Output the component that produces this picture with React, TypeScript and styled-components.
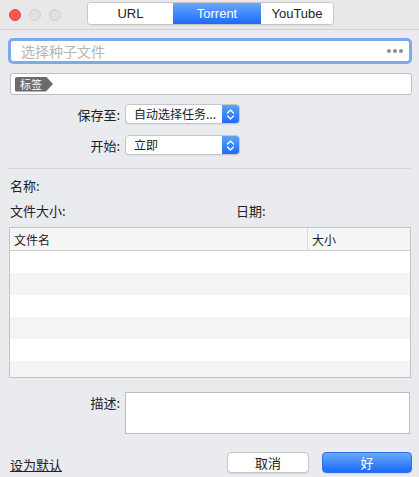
import React from 'react';
import styled, {createGlobalStyle} from 'styled-components';

const GlobalStyle = createGlobalStyle`
  html, body {
    margin: 0;
    padding: 0;
    background: #e9ebef;
  }
  body {
    font-family: "Noto Sans CJK SC", "Liberation Sans", sans-serif;
    font-size: 13px;
    color: #222;
  }
`;

const Window = styled.div`
  width: 419px;
  height: 477px;
  display: flex;
  flex-direction: column;
  background: #e9ebef;
  overflow: hidden;
`;

const TitleBar = styled.div`
  height: 30px;
  flex-shrink: 0;
  display: flex;
  align-items: center;
  padding-left: 9px;
  background: #e8e8e8;
  border-bottom: 1px solid #d2d2d2;
  box-sizing: border-box;
`;

const Lights = styled.div`
  display: flex;
  gap: 8px;
  width: 78px;
`;

const Light = styled.span<{$red?: boolean}>`
  width: 12px;
  height: 12px;
  border-radius: 50%;
  box-sizing: border-box;
  background: ${(p) => (p.$red ? '#fc5753' : '#e0e0e0')};
  border: 1px solid ${(p) => (p.$red ? '#de4a45' : '#d0d0d0')};
`;

const Segmented = styled.div`
  display: flex;
  height: 21px;
  margin-top: -2px;
  border: 1px solid #c8c8c8;
  border-radius: 4px;
  overflow: hidden;
  background: #fff;
  box-shadow: 0 1px 0 rgba(0, 0, 0, 0.05);
`;

const Segment = styled.div<{$active?: boolean; $w: number}>`
  width: ${(p) => p.$w}px;
  display: flex;
  align-items: center;
  justify-content: center;
  font-family: "Liberation Sans", "Noto Sans", sans-serif;
  font-size: 13px;
  color: ${(p) => (p.$active ? '#fff' : '#222')};
  background: ${(p) => (p.$active ? 'linear-gradient(#6aa6fb, #1a6cf8)' : '#fff')};
`;

const Content = styled.div`
  flex: 1;
  display: flex;
  flex-direction: column;
  padding: 8px 7px 0 8px;
`;

const FileInput = styled.div`
  height: 26px;
  box-sizing: border-box;
  border: 3px solid #7ea9ee;
  border-radius: 5px;
  background: #fff;
  display: flex;
  align-items: center;
  justify-content: space-between;
  padding: 0 6px 0 10px;
`;

const Placeholder = styled.span`
  font-size: 14px;
  color: #b5b5b5;
`;

const Dots = styled.span`
  display: flex;
  gap: 2px;
  span {
    width: 4px;
    height: 4px;
    border-radius: 50%;
    background: #8e8e8e;
  }
`;

const TagField = styled.div`
  margin: 9px 0 0 2px;
  height: 22px;
  box-sizing: border-box;
  border: 1px solid #bdbdbd;
  border-radius: 3px;
  background: #fff;
  display: flex;
  align-items: center;
  padding-left: 4px;
`;

const Tag = styled.span`
  height: 15px;
  padding: 0 11px 0 5px;
  display: flex;
  align-items: center;
  font-size: 11px;
  color: #fff;
  background: #6b6b6b;
  border-radius: 2px 0 0 2px;
  clip-path: polygon(0 0, calc(100% - 7px) 0, 100% 50%, calc(100% - 7px) 100%, 0 100%);
`;

const Form = styled.div`
  display: grid;
  grid-template-columns: 112px 115px;
  column-gap: 5px;
  row-gap: 11px;
  align-items: center;
  margin-top: 9px;
`;

const Label = styled.span`
  text-align: right;
  font-size: 13px;
`;

const Popup = styled.div`
  height: 20px;
  box-sizing: border-box;
  border: 1px solid #c6c6c6;
  border-radius: 4px;
  background: #fff;
  display: flex;
  overflow: hidden;
  box-shadow: 0 1px 1px rgba(0, 0, 0, 0.06);
`;

const PopupText = styled.span`
  flex: 1;
  padding-left: 8px;
  font-size: 12px;
  line-height: 18px;
  white-space: nowrap;
`;

const Stepper = styled.span`
  width: 17px;
  background: linear-gradient(#5ea0fb, #1b6ef6);
  display: flex;
  align-items: center;
  justify-content: center;
`;

const Separator = styled.div`
  height: 1px;
  background: #d3d5d9;
  margin: 13px 1px 0 1px;
`;

const InfoRow = styled.div`
  display: flex;
  font-size: 13px;
  height: 18px;
  align-items: center;
  margin-top: 7px;
  padding-left: 2px;
`;

const InfoCell = styled.span<{$w?: number}>`
  width: ${(p) => (p.$w ? `${p.$w}px` : 'auto')};
`;

const Table = styled.div`
  margin: 8px 1px 0 1px;
  height: 151px;
  box-sizing: border-box;
  border: 1px solid #c4c4c4;
  background: #fff;
  display: flex;
  flex-direction: column;
  overflow: hidden;
`;

const HeaderRow = styled.div`
  height: 22px;
  flex-shrink: 0;
  display: flex;
  background: #f5f5f5;
  border-bottom: 1px solid #cfcfcf;
  font-size: 12px;
`;

const HeaderCell = styled.div<{$w?: number}>`
  width: ${(p) => (p.$w ? `${p.$w}px` : 'auto')};
  flex: ${(p) => (p.$w ? 'none' : 1)};
  padding-left: 4px;
  display: flex;
  align-items: center;
  box-sizing: border-box;
  & + & {
    border-left: 1px solid #dadada;
  }
`;

const Row = styled.div<{$odd: boolean}>`
  height: 22px;
  flex-shrink: 0;
  background: ${(p) => (p.$odd ? '#f3f4f4' : '#fff')};
`;

const DescRow = styled.div`
  display: grid;
  grid-template-columns: 112px 285px;
  column-gap: 5px;
  margin-top: 14px;
`;

const DescLabel = styled(Label)`
  padding-top: 1px;
`;

const TextArea = styled.div`
  height: 42px;
  box-sizing: border-box;
  border: 1px solid #bdbdbd;
  background: #fff;
`;

const Footer = styled.div`
  display: flex;
  align-items: center;
  margin-top: 17px;
  padding-left: 2px;
`;

const LinkText = styled.span`
  font-size: 13px;
  text-decoration: underline;
  flex: 1;
  padding-top: 4px;
`;

const Button = styled.div<{$primary?: boolean; $w: number}>`
  width: ${(p) => p.$w}px;
  height: 21px;
  box-sizing: border-box;
  border-radius: 4px;
  display: flex;
  align-items: center;
  justify-content: center;
  font-size: 13px;
  color: ${(p) => (p.$primary ? '#fff' : '#222')};
  background: ${(p) => (p.$primary ? 'linear-gradient(#6aa8fb, #1a6cf7)' : '#fff')};
  border: 1px solid ${(p) => (p.$primary ? '#2a72ec' : '#c6c6c6')};
  box-shadow: 0 1px 1px rgba(0, 0, 0, 0.08);
  & + & {
    margin-left: 13px;
  }
`;

const Chevrons = () => (
  <svg width="9" height="13" viewBox="0 0 9 13">
    <path d="M1.5 5 L4.5 2 L7.5 5 M1.5 8 L4.5 11 L7.5 8" fill="none" stroke="#fff" strokeWidth="1.3" strokeLinecap="round" strokeLinejoin="round" />
  </svg>
);

const SelectBox = ({value}: {value: string}) => (
  <Popup>
    <PopupText>{value}</PopupText>
    <Stepper>
      <Chevrons />
    </Stepper>
  </Popup>
);

export default function App() {
  return (
    <Window>
      <GlobalStyle />
      <TitleBar>
        <Lights>
          <Light $red />
          <Light />
          <Light />
        </Lights>
        <Segmented>
          <Segment $w={85}>URL</Segment>
          <Segment $w={88} $active>Torrent</Segment>
          <Segment $w={72}>YouTube</Segment>
        </Segmented>
      </TitleBar>
      <Content>
        <FileInput>
          <Placeholder>选择种子文件</Placeholder>
          <Dots><span /><span /><span /></Dots>
        </FileInput>
        <TagField>
          <Tag>标签</Tag>
        </TagField>
        <Form>
          <Label>保存至:</Label>
          <SelectBox value="自动选择任务..." />
          <Label>开始:</Label>
          <SelectBox value="立即" />
        </Form>
        <Separator />
        <InfoRow>
          <InfoCell>名称:</InfoCell>
        </InfoRow>
        <InfoRow>
          <InfoCell $w={226}>文件大小:</InfoCell>
          <InfoCell>日期:</InfoCell>
        </InfoRow>
        <Table>
          <HeaderRow>
            <HeaderCell>文件名</HeaderCell>
            <HeaderCell $w={103}>大小</HeaderCell>
          </HeaderRow>
          {[0, 1, 2, 3, 4, 5].map((i) => (
            <Row key={i} $odd={i % 2 === 1} />
          ))}
        </Table>
        <DescRow>
          <DescLabel>描述:</DescLabel>
          <TextArea />
        </DescRow>
        <Footer>
          <LinkText>设为默认</LinkText>
          <Button $w={82}>取消</Button>
          <Button $w={90} $primary>好</Button>
        </Footer>
      </Content>
    </Window>
  );
}
